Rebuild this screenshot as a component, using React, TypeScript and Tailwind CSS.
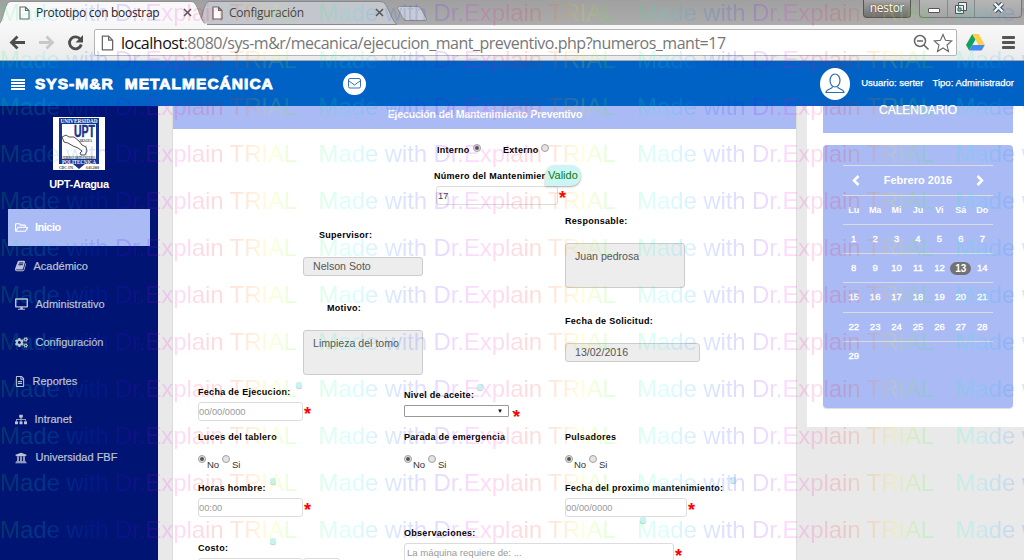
import React from "react";
import { FaRegFolderOpen, FaDesktop, FaCogs, FaRegFileAlt, FaSitemap, FaUniversity } from "react-icons/fa";

const BookIcon = () => (
  <svg viewBox="0 0 1792 1792" className="h-[12px] w-[12px]" fill="currentColor">
    <path d="M1639 478q40 57 18 129l-275 906q-19 64-76.500 107.500t-122.500 43.500h-923q-77 0-148.500-53.500t-99.500-131.500q-24-67-2-127 0-4 3-27t4-37q1-8-3-21.500t-3-19.500q2-11 8-21t16.500-23.500 16.500-23.500q23-38 45-91.500t30-91.500q3-10 .5-30t-.5-28q3-11 17-28t17-23q21-36 42-92t25-90q1-9-2.500-32t.5-28q4-13 22-30.500t22-22.500q19-26 42.500-84.500t27.500-96.500q1-8-3-25.500t-2-26.500q2-8 9-18t18-23 17-21q8-12 16.500-30.500t15-35 16-36 19.500-32 26.500-23.500 36-11.500 47.500 5.500l-1 3q38-9 51-9h761q74 0 114 56t18 130l-274 906q-36 119-71.500 153.500t-128.500 34.500h-869q-27 0-38 15-11 16-1 43 24 70 144 70h923q29 0 56-15.500t35-41.500l300-987q7-22 5-57 38 15 59 43zm-1064 2q-4 13 2 22.500t20 9.500h608q13 0 25.500-9.500t16.500-22.500l21-64q4-13-2-22.500t-20-9.500h-608q-13 0-25.500 9.500t-16.500 22.500zm-83 256q-4 13 2 22.500t20 9.500h608q13 0 25.500-9.500t16.500-22.500l21-64q4-13-2-22.500t-20-9.500h-608q-13 0-25.500 9.500t-16.500 22.500z" />
  </svg>
);

const PageIcon = ({ className }: { className: string }) => (
  <svg viewBox="0 0 11 14" className={className} fill="#fdfdfd" stroke="#666" strokeWidth="1.1">
    <path d="M1 1h5.500l3.500 3.500v8.500h-9zM6.500 1v3.500h3.500" />
  </svg>
);

const CloseX = () => (
  <svg viewBox="0 0 9 9" className="h-[9px] w-[9px]" stroke="#555" strokeWidth="1.5">
    <path d="M1 1l7 7M8 1l-7 7" />
  </svg>
);

const Chevron = ({ d }: { d: string }) => (
  <svg viewBox="0 0 9 11" className="h-[11px] w-[9px]" fill="none" stroke="#fff" strokeWidth="2.500"><path d={d} /></svg>
);

function Tabs() {
  return (
    <div className="relative h-[25px] bg-gradient-to-b from-[#a0a0a0] to-[#acacac]">
      <svg className="absolute inset-0 h-[25px] w-[440px]" viewBox="0 0 440 25">
        <path d="M198 24.500C203 21 203 1.500 209 1.500H381C388 1.500 391 21 397 24.500z" fill="#c3c7cd" stroke="#85888c" />
        <path d="M399.500 6.500h18q3 0 4 3l5 9q1 2-2 2h-18q-3 0-4-3l-5-9q-1-2 2-2z" fill="#c9ccd2" stroke="#888b90" />
        <path d="M-2 25.500C4 21 4 1.500 11 1.500H191C199 1.500 199 21 207 25.500z" fill="#f8f8f8" stroke="#909090" />
        <path d="M0 24.500h207" stroke="#f6f6f6" strokeWidth="2" />
      </svg>
      <div className="relative flex h-full items-center font-['Open_Sans',sans-serif] text-[12px] text-[#222]">
        <div className="flex w-[207px] items-center pl-[19px]">
          <PageIcon className="h-[14px] w-[11px]" />
          <span className="ml-[6px] w-[130px] whitespace-nowrap tracking-[-0.300px]">Prototipo con boostrap</span>
          <span className="ml-[17px]"><CloseX /></span>
        </div>
        <div className="flex items-center pl-[5px]">
          <PageIcon className="h-[14px] w-[11px]" />
          <span className="ml-[6px] w-[130px] whitespace-nowrap tracking-[-0.250px] text-[#444]">Configuración</span>
          <span className="ml-[16px]"><CloseX /></span>
        </div>
        <div className="ml-auto flex h-full items-start self-start">
          <div className="mr-[8px] h-[18px] w-[48px] rounded-b-[4px] border border-t-0 border-[#555] bg-gradient-to-b from-[#a5a5a5] to-[#707070] text-center text-[12px] leading-[16px] tracking-[-0.300px] text-white [text-shadow:0_0_2px_#333]">nestor</div>
          <div className="mr-[2px] flex h-[18px] w-[103px] rounded-b-[4px] border border-t-0 border-[#777] bg-gradient-to-b from-[#b5b5b5] to-[#a5a5a5]">
            <div className="flex w-[28px] items-center justify-center border-r border-[#888]"><span className="mt-[3px] h-[5px] w-[12px] rounded-[1px] border border-[#555] bg-white" /></div>
            <div className="flex w-[27px] items-start justify-center border-r border-[#888] pt-[2px]">
              <svg viewBox="0 0 12 12" className="h-[12px] w-[12px]" fill="#eee" stroke="#4c4f5c"><path d="M3.500.5h8v8h-8zM.5 3.500h8v8h-8z" /><path d="M3 6h3v3h-3z" fill="#aaa" /></svg>
            </div>
            <div className="flex flex-1 items-start justify-center pt-[2px]">
              <svg viewBox="0 0 13 11" className="h-[11px] w-[13px]"><path d="M2.500 1.500l8 8M10.500 1.500l-8 8" stroke="#4c4f5c" strokeWidth="4.500" /><path d="M2.500 1.500l8 8M10.500 1.500l-8 8" stroke="#fff" strokeWidth="2.200" /></svg>
            </div>
          </div>
        </div>
      </div>
    </div>
  );
}

function Toolbar() {
  return (
    <div className="flex h-[36px] items-center border-b border-[#a9a9a9] bg-gradient-to-b from-[#f8f8f8] to-[#ebebeb]">
      <svg viewBox="0 0 94 36" className="h-[36px] w-[94px] shrink-0" fill="none" strokeWidth="2.800">
        <path d="M11.500 17.500H25M17.500 11.500l-6 6 6 6" stroke="#4d4d4d" />
        <path d="M39 17.500H52.500M46.500 11.500l6 6-6 6" stroke="#c8c8c8" />
        <path d="M80.500 14.500a6 6 0 1 0 .8 5" stroke="#4d4d4d" />
        <path d="M83 10v7.500h-7.500z" fill="#4d4d4d" />
      </svg>
      <div className="flex h-[27px] w-[863px] shrink-0 items-center rounded-[2px] border border-[#b5b5b5] bg-white">
        <PageIcon className="ml-[6px] h-[16px] w-[13px]" />
        <div className="ml-[7px] whitespace-nowrap font-['Open_Sans',sans-serif] text-[16px] tracking-[-0.490px] text-[#777]"><span className="text-[#111]">localhost</span>:8080/sys-m&amp;r/mecanica/ejecucion_mant_preventivo.php?numeros_mant=17</div>
        <svg viewBox="0 0 42 20" className="ml-auto mr-[2px] h-[20px] w-[42px]" fill="none" stroke="#666">
          <circle cx="8" cy="8" r="5.500" strokeWidth="1.500" /><path d="M5 8h6M12 12l4.500 4.500" strokeWidth="1.600" />
          <path d="M31 1.500l2.500 5.800 6.200.6-4.700 4.100 1.500 6.500-5.500-3.500-5.500 3.500 1.500-6.500-4.700-4.100 6.200-.6z" strokeWidth="1.100" />
        </svg>
      </div>
      <svg viewBox="0 0 19 17" className="ml-[9px] h-[17px] w-[19px]">
        <path d="M6.300 0L0 11l3.200 5.500L9.500 5.500z" fill="#11a15f" /><path d="M6.300 0h6.300l6.200 11h-6.300z" fill="#ffcf48" /><path d="M3.200 16.500L6.300 11h12.500l-3.200 5.500z" fill="#4688f4" />
      </svg>
      <div className="ml-[17px] flex w-[13px] flex-col gap-[2px]">
        <span className="h-[3px] rounded-[1px] bg-[#555]" /><span className="h-[3px] rounded-[1px] bg-[#555]" /><span className="h-[3px] rounded-[1px] bg-[#555]" />
      </div>
    </div>
  );
}

function Header() {
  return (
    <header className="flex h-[45px] items-center bg-[#0062c5] text-white">
      <div className="ml-[11px] mt-[1px] flex w-[14px] flex-col gap-[1px]">
        <span className="h-[2px] bg-white" /><span className="h-[2px] bg-white" /><span className="h-[2px] bg-white" /><span className="h-[2px] bg-white" />
      </div>
      <div className="ml-[10px] flex w-[308px] gap-[11px] text-[15.500px] font-bold tracking-[1.030px] [-webkit-text-stroke:0.9px_white]"><span>SYS-M&amp;R</span><span>METALMECÁNICA</span></div>
      <div className="flex h-[22px] w-[23px] items-center justify-center rounded-full bg-white">
        <svg viewBox="0 0 13 11" className="h-[11px] w-[13px]" fill="none" stroke="#3a6fb5"><rect x=".5" y=".5" width="12" height="9.500" rx="1.500" /><path d="M1 3l5.500 4L12 3" /></svg>
      </div>
      <div className="ml-auto flex h-[32px] w-[30px] items-center justify-center rounded-[50%] bg-white">
        <svg viewBox="0 0 20 21" className="h-[21px] w-[20px]" fill="none" stroke="#2c6dae" strokeWidth="1.200"><ellipse cx="10" cy="7.500" rx="5" ry="6.500" /><path d="M7.500 13.500c0 3-6 2-6.500 6h18c-.5-4-6.500-3-6.500-6" /></svg>
      </div>
      <div className="ml-[11px] mr-[10px] flex gap-[9px] whitespace-nowrap text-[9.500px] [-webkit-text-stroke:0.25px_white]"><span>Usuario: serter</span><span>Tipo: Administrador</span></div>
    </header>
  );
}

function Logo() {
  return (
    <svg viewBox="0 0 52 53" className="mx-auto h-[53px] w-[52px]" fontFamily="Liberation Serif, serif" fontWeight="bold">
      <path d="M0 0h52v53H0z" fill="#fff" />
      <path d="M6 1h40v46h-14l-6 5-6-5H6z" fill="#16348f" />
      <path d="M9 7h34v35H9z" fill="#fff" />
      <text x="7.500" y="6" fontSize="6" fill="#fff" textLength="37" lengthAdjust="spacingAndGlyphs">UNIVERSIDAD</text>
      <text x="21" y="19.500" fontSize="16" fontFamily="Liberation Sans, sans-serif" fill="#16348f" stroke="#16348f" strokeWidth=".5" textLength="21" lengthAdjust="spacingAndGlyphs">UPT</text>
      <text x="26" y="25" fontSize="4.500" fill="#222" textLength="13" lengthAdjust="spacingAndGlyphs">ARAGUA</text>
      <path d="M9 20l4-2 3 2h5l5 4 3 4 4 2 1 4-2 4-4 0-1-2 2-2-4-3-5-2-5-3-4-1z" fill="#fff" stroke="#222" strokeWidth=".8" />
      <text x="9.500" y="41.500" fontSize="4" fill="#222" textLength="33" lengthAdjust="spacingAndGlyphs">FEDERICO BRITO FIGUEROA</text>
      <text x="9" y="47" fontSize="6" fill="#fff" textLength="34" lengthAdjust="spacingAndGlyphs">POLITECNICA</text>
      <text x="6" y="52" fontSize="4" fill="#333" textLength="14" lengthAdjust="spacingAndGlyphs">CDC 376</text>
      <text x="33" y="52" fontSize="4" fill="#333" textLength="13" lengthAdjust="spacingAndGlyphs">6.03.2000</text>
    </svg>
  );
}

const menu = [
  { label: "Académico", icon: <BookIcon />, gap: "ml-[6.500px]" },
  { label: "Administrativo", icon: <FaDesktop className="h-[12px] w-[13px]" />, gap: "ml-[7.500px]" },
  { label: "Configuración", icon: <FaCogs className="h-[13px] w-[13px]" />, gap: "ml-[7.500px]" },
  { label: "Reportes", icon: <FaRegFileAlt className="h-[11px] w-[10px]" />, gap: "ml-[7.500px]" },
  { label: "Intranet", icon: <FaSitemap className="h-[11px] w-[12px]" />, gap: "ml-[7.500px]" },
  { label: "Universidad FBF", icon: <FaUniversity className="h-[12px] w-[12px]" />, gap: "ml-[8.500px]" },
];

function Sidebar() {
  return (
    <aside className="w-[158px] shrink-0 bg-[#001474] pt-[11px]">
      <Logo />
      <div className="mt-[7px] text-center text-[11px] font-bold leading-[14px] tracking-[-0.350px] text-white">UPT-Aragua</div>
      <div className="mx-[8px] mt-[18px] flex h-[37px] items-center bg-[#aabaf5] pl-[7px] text-[11px] font-bold tracking-[-0.500px] text-white"><FaRegFolderOpen className="h-[13px] w-[13px]" /><span className="ml-[7px]">Inicio</span></div>
      <nav className="mt-[1px] flex flex-col text-[11px] text-[#bfc3d2]">
        {menu.map((m) => (
          <div key={m.label} className="flex h-[38.300px] items-center pl-[15px] [-webkit-text-stroke:0.2px_#bfc3d2]">{m.icon}<span className={m.gap}>{m.label}</span></div>
        ))}
      </nav>
    </aside>
  );
}

const Label = ({ children, className = "" }: { children: React.ReactNode; className?: string }) => (
  <div className={"relative h-[12px] whitespace-nowrap text-[9px] font-bold leading-[12px] tracking-[0.290px] text-black " + className}>{children}</div>
);

const Dot = ({ className }: { className: string }) => (
  <span className={"absolute h-[6px] w-[6px] rounded-[2px] bg-[#c8f3f3] shadow-[0_1px_1px_#ccc] " + className} />
);

const Star = ({ className = "" }: { className?: string }) => (
  <span className={"h-[14px] w-[8px] text-[18px] font-bold leading-[20px] text-[#f00] " + className}>*</span>
);

const Radio = ({ on }: { on?: boolean }) => (
  <span className="flex h-[8px] w-[8px] items-center justify-center rounded-full border border-[#a0a0a0] bg-[#e4e4e4]">{on && <span className="h-[4px] w-[4px] rounded-full bg-[#555]" />}</span>
);

const Radios = () => (
  <div className="mt-[12px] flex h-[16px] text-[9.500px] leading-[12px] text-[#333]">
    <Radio on /><span className="ml-[1px] mt-[3.500px] w-[15px]">No</span><Radio /><span className="ml-[2px] mt-[3.500px]">Si</span>
  </div>
);

const Field = ({ children, className = "" }: { children?: React.ReactNode; className?: string }) => (
  <div className={"h-[19px] shrink-0 whitespace-nowrap rounded-[3px] border border-[#dcdcdc] text-[9.300px] leading-[18px] " + className}>{children}</div>
);

const Disabled = ({ children, className = "" }: { children: React.ReactNode; className: string }) => (
  <div className={"whitespace-nowrap rounded-[3px] border border-[#ccc] bg-[#ededed] pl-[9px] text-[10.600px] text-[#555] " + className}>{children}</div>
);

function Form() {
  return (
    <main className="ml-[14px] flex h-[454px] w-[625px] shrink-0 flex-col overflow-hidden border-x border-[#dcdcdc] bg-white">
      <h1 className="h-[23px] shrink-0 bg-[#aabaf5] pl-px text-center text-[10.500px] font-bold leading-[17px] tracking-[-0.180px] text-white">Ejecución del Mantenimiento Preventivo</h1>
      <div className="ml-[264px] mt-[15px] flex h-[12px] shrink-0">
        <Label className="w-[36px]">Interno</Label><Radio on />
        <Label className="ml-[22px] w-[38px]">Externo</Label><Radio />
      </div>
      <div className="relative ml-[261px] mt-[14px] flex shrink-0">
        <Label className="w-[112px] overflow-hidden">Número del Mantenimiento:</Label>
        <div className="absolute left-[111px] top-[-5px] h-[21px] w-[36px] rounded-[10px] rounded-bl-none bg-[#cdf5f4] pl-[3px] text-[11px] leading-[21px] text-[#0a7a0a] shadow-[0_1px_2px_#aaa]">Valido</div>
      </div>
      <div className="ml-[263px] mt-[4px] flex shrink-0"><Field className="w-[122px] pl-[1px] text-[#444]">17</Field><Star className="ml-[1px] mt-[2px]" /></div>

      <div className="flex h-[173px] shrink-0">
        <div className="ml-[130px] w-[262px]">
          <Label className="ml-[16px] mt-[24px]">Supervisor:</Label>
          <Disabled className="mt-[16px] h-[19px] w-[120px] leading-[17px]">Nelson Soto</Disabled>
          <Label className="ml-[24px] mt-[26px]">Motivo:</Label>
          <Disabled className="mt-[16px] h-[45px] w-[120px] leading-[25px]">Limpieza del tomo</Disabled>
        </div>
        <div>
          <Label className="mt-[10px]">Responsable:</Label>
          <Disabled className="mt-[16px] h-[45px] w-[120px] leading-[25px]">Juan pedrosa</Disabled>
          <Label className="mt-[27px]">Fecha de Solicitud:</Label>
          <Disabled className="mt-[16px] h-[19px] w-[135px] leading-[17px]">13/02/2016</Disabled>
        </div>
      </div>

      <div className="ml-[25px] flex shrink-0">
        <div className="w-[206px]">
          <Label className="mt-[8px]">Fecha de Ejecucion:<Dot className="left-[98px] top-[-4px]" /></Label>
          <div className="mt-[4px] flex"><Field className="w-[105px] text-[#999]">00/00/0000</Field><Star className="ml-px mt-[2px]" /></div>
          <Label className="mt-[10px]">Luces del tablero</Label>
          <Radios />
          <Label className="mt-[11px]">Horas hombre:<Dot className="left-[72px] top-[-4px]" /></Label>
          <div className="mt-[4px] flex"><Field className="w-[105px] text-[#999]">00:00</Field><Star className="ml-px mt-[2px]" /></div>
          <Label className="mt-[25px]">Costo:<Dot className="left-[72px] top-[-4px]" /></Label>
          <div className="mt-[4px] flex"><Field className="w-[105px]" /><Field className="w-[37px]" /></div>
        </div>
        <div className="w-[161px]">
          <Label className="mt-[11px]">Nivel de aceite:<Dot className="left-[73px] top-[-5px]" /></Label>
          <div className="mt-[4px] flex h-[12px]">
            <div className="flex h-[12px] w-[105px] items-center justify-end rounded-[1px] border border-[#999] pr-[5px] text-[6px] text-black">▼</div>
            <span className="ml-[3px] text-[9px] leading-[12px] text-black">-</span><Star className="ml-[-2px] mt-[2px]" />
          </div>
          <Label className="mt-[14px]">Parada de emergencia</Label>
          <Radios />
          <Label className="mt-[56px]">Observaciones:<Dot className="left-[236px] top-[-10px]" /></Label>
          <div className="mt-[4px] flex"><Field className="w-[270px] pl-[2px] text-[9.600px] text-[#999]">La máquina requiere de: ...</Field><Star className="ml-px mt-[3px]" /></div>
        </div>
        <div>
          <Label className="mt-[53px]">Pulsadores</Label>
          <Radios />
          <Label className="mt-[11px]">Fecha del proximo mantenimiento:<Dot className="left-[165px] top-[-5px]" /></Label>
          <div className="mt-[4px] flex"><Field className="w-[122px] text-[#999]">00/00/0000</Field><Star className="ml-px mt-[2px]" /></div>
        </div>
      </div>
    </main>
  );
}

const days = Array.from({ length: 29 }, (_, i) => i + 1);

function Calendar() {
  return (
    <aside className="ml-[10px] h-[321px] w-[217px] bg-white pl-[16px]">
      <div className="h-[27px] w-[190px] bg-[#aabaf5] text-center text-[12px] leading-[9px] text-white [-webkit-text-stroke:0.25px_white]">CALENDARIO</div>
      <div className="mt-[12px] h-[263px] w-[190px] rounded-[4px] bg-[#aabaf5] px-[20px] pt-[20px] text-white shadow-[0_1px_1px_#ddd]">
        <div className="flex h-[29.500px] items-center justify-between border-t border-[#dcdcdc] px-[8px] text-[11px] font-bold"><Chevron d="M7.500 1L3 5.500L7.500 10" /><span>Febrero 2016</span><Chevron d="M1.500 1L6 5.500L1.500 10" /></div>
        <div className="grid grid-cols-7 text-center text-[9px]">
          {["Lu", "Ma", "Mi", "Ju", "Vi", "Sá", "Do"].map((d) => (
            <span key={d} className="h-[29.300px] border-t border-[#dcdcdc] font-bold leading-[29px]">{d}</span>
          ))}
          {days.map((d) => (
            <span key={d} className="flex h-[29.300px] items-center justify-center border-t border-[#dcdcdc] text-[9.500px] [-webkit-text-stroke:0.35px_white]">
              {d === 13 ? <span className="h-[13px] w-[21px] rounded-[7px] bg-[#727272] text-[10px] font-bold leading-[13px] [-webkit-text-stroke:0px]">13</span> : d}
            </span>
          ))}
          <span className="col-span-6 border-t border-[#dcdcdc]" />
        </div>
      </div>
    </aside>
  );
}

function Watermark() {
  return (
    <div className="pointer-events-none absolute left-0 top-0 flex w-[1300px] flex-col bg-[repeating-linear-gradient(90deg,hsl(135_100%_50%)_0px,hsl(180_100%_50%)_40px,hsl(225_100%_50%)_90px,hsl(260_100%_50%)_130px,hsl(300_100%_50%)_165px,hsl(335_100%_50%)_195px,hsl(360_100%_50%)_220px,hsl(390_100%_50%)_250px,hsl(420_100%_50%)_270px,hsl(465_100%_50%)_295px,hsl(495_100%_50%)_312px)] bg-clip-text text-[24px] text-transparent opacity-[0.14]">
      {Array.from({ length: 12 }, (_, r) => (
        <div key={r} className="flex h-[47px] leading-[26px]">
          {Array.from({ length: 4 }, (_, c) => (
            <span key={c} className="w-[318.500px] shrink-0 whitespace-nowrap tracking-[-0.100px]">Made with Dr.Explain TRIAL</span>
          ))}
        </div>
      ))}
    </div>
  );
}

export default function App() {
  return (
    <div className="relative h-[560px] w-[1024px] overflow-hidden bg-[#e9e9e9] font-['Liberation_Sans',Arial,sans-serif]">
      <Tabs />
      <Toolbar />
      <Header />
      <div className="flex h-[454px] items-stretch">
        <Sidebar />
        <Form />
        <Calendar />
      </div>
      <Watermark />
    </div>
  );
}
